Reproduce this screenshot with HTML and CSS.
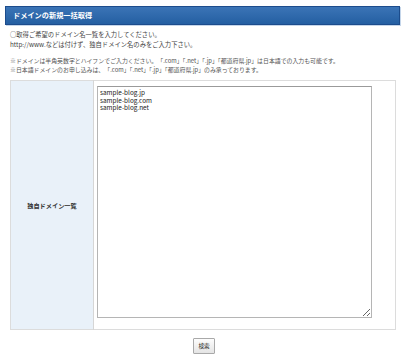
FILE: index.html
```html
<!DOCTYPE html>
<html lang="ja">
<head>
    <meta charset="UTF-8">
    <title>ドメインの新規一括取得</title>
    <link rel="stylesheet" href="styles.css">
</head>
<body>
    <div class="page">
        <h2 class="title">ドメインの新規一括取得</h2>

        <div class="intro">
            <p>○取得ご希望のドメイン名一覧を入力してください。<br>http://www.などは付けず、独自ドメイン名のみをご入力下さい。</p>
            <p class="note">※ドメインは半角英数字とハイフンでご入力ください。「.com」「.net」「.jp」「都道府県.jp」は日本語での入力も可能です。<br>※日本語ドメインのお申し込みは、「.com」「.net」「.jp」「都道府県.jp」のみ承っております。</p>
        </div>

        <form class="search">
            <table class="form-table">
                <tr>
                    <th>独自ドメイン一覧</th>
                    <td><textarea name="domains">sample-blog.jp
sample-blog.com
sample-blog.net</textarea></td>
                </tr>
            </table>
            <div class="actions">
                <button type="button" class="btn">検索</button>
            </div>
        </form>
    </div>
</body>
</html>
```

FILE: styles.css
```css
* {
    margin: 0;
    padding: 0;
    box-sizing: border-box;
}

body {
    font-family: "Noto Sans CJK JP", "Noto Sans", sans-serif;
    background: #fff;
    color: #333;
}

.page {
    padding: 6px 8px 0 5px;
}

.title {
    height: 19px;
    line-height: 17px;
    padding-left: 7px;
    font-size: 7.2px;
    font-weight: bold;
    color: #fff;
    background: linear-gradient(#3b74b6, #245fa2);
    border: 1px solid #1c4c8c;
    box-shadow: 1px 1px 0 #c5d6ea;
}

.intro {
    padding: 5px 0 0 5px;
}

.intro p {
    font-size: 6.3px;
    line-height: 10px;
    color: #444;
}

.intro p.note {
    margin-top: 6px;
    font-size: 5.9px;
    line-height: 9px;
    color: #555;
}

.search {
    padding: 6px 4px 0 5px;
}

.form-table {
    width: 100%;
    border-collapse: collapse;
    border: 1px solid #dcdcdc;
}

.form-table th {
    width: 83px;
    background: #e9f1f9;
    border-right: 1px solid #d6d6d6;
    font-size: 6.2px;
    font-weight: bold;
    color: #333;
}

.form-table td {
    padding: 5px 23px 11px 3px;
}

.form-table textarea {
    display: block;
    width: 100%;
    height: 232px;
    padding: 2px;
    border: 1px solid #b5b5b5;
    border-top-color: #9a9a9a;
    font-family: "Noto Sans CJK JP", "Noto Sans", sans-serif;
    font-size: 6.4px;
    line-height: 7.5px;
    color: #222;
    resize: vertical;
}

.actions {
    display: flex;
    justify-content: center;
    padding: 8px 0 0 2px;
}

.btn {
    width: 22px;
    height: 16px;
    font-family: "Noto Sans CJK JP", sans-serif;
    font-size: 5.6px;
    color: #222;
    background: linear-gradient(#fdfdfd, #e4e4e4);
    border: 1px solid #a9a9a9;
    border-radius: 1px;
}
```
